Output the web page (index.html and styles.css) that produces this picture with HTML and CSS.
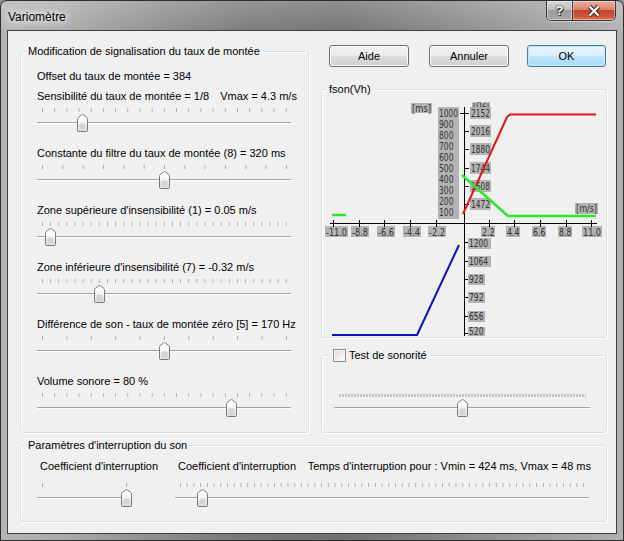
FILE: index.html
```html
<!DOCTYPE html>
<html lang="fr">
<head>
<meta charset="utf-8">
<title>Variomètre</title>
<link rel="stylesheet" href="styles.css">
</head>
<body>
<svg class="defs" width="0" height="0" aria-hidden="true">
  <defs>
    <linearGradient id="thumbFill" x1="0" y1="0" x2="0" y2="1">
      <stop offset="0" stop-color="#ffffff"/>
      <stop offset="0.55" stop-color="#f3f3f3"/>
      <stop offset="1" stop-color="#dadada"/>
    </linearGradient>
    <symbol id="thumb" viewBox="0 0 11 18">
      <path d="M1.5,17.5 Q0.5,17.5 0.5,16.5 V5.2 Q0.5,4.2 1.3,3.4 L4.6,0.9 Q5.5,0.3 6.4,0.9 L9.7,3.4 Q10.5,4.2 10.5,5.2 V16.5 Q10.5,17.5 9.5,17.5 Z" fill="url(#thumbFill)" stroke="#7a7a7a"/>
      <rect x="2.5" y="9.5" width="6" height="6" rx="0.5" fill="#d4d4d4"/>
    </symbol>
  </defs>
</svg>
<div class="window">
  <div class="titlebar">
    <span class="title">Variomètre</span>
    <div class="caption-buttons">
      <div class="cap help">?</div>
      <div class="cap close">
        <svg width="14" height="12" viewBox="0 0 14 12">
          <path d="M2.5,1.5 L11.5,10.5 M11.5,1.5 L2.5,10.5" stroke="#3b1d16" stroke-width="4.4"/>
          <path d="M2.5,1.5 L11.5,10.5 M11.5,1.5 L2.5,10.5" stroke="#ffffff" stroke-width="2.4"/>
        </svg>
      </div>
    </div>
  </div>
  <div class="client">
    <div class="top">
      <div class="group left-group">
        <div class="group-title">Modification de signalisation du taux de montée</div>
        <div class="rows">
          <div class="label first">Offset du taux de montée = 384</div>
          <div class="label second">Sensibilité du taux de montée = 1/8<span class="vmax">Vmax = 4.3 m/s</span></div>
          <div class="slider" style="--n:20;--p:0.165"><div class="ticks"></div><div class="track"></div><svg class="thumb"><use href="#thumb"/></svg></div>
          <div class="label">Constante du filtre du taux de montée (8) = 320 ms</div>
          <div class="slider" style="--n:12;--p:0.5"><div class="ticks"></div><div class="track"></div><svg class="thumb"><use href="#thumb"/></svg></div>
          <div class="label">Zone supérieure d'insensibilité (1) = 0.05 m/s</div>
          <div class="slider" style="--n:30;--p:0.0333"><div class="ticks"></div><div class="track"></div><svg class="thumb"><use href="#thumb"/></svg></div>
          <div class="label">Zone inférieure d'insensibilité (7) = -0.32 m/s</div>
          <div class="slider" style="--n:30;--p:0.2333"><div class="ticks"></div><div class="track"></div><svg class="thumb"><use href="#thumb"/></svg></div>
          <div class="label">Différence de son - taux de montée zéro [5] = 170 Hz</div>
          <div class="slider" style="--n:10;--p:0.5"><div class="ticks"></div><div class="track"></div><svg class="thumb"><use href="#thumb"/></svg></div>
          <div class="label">Volume sonore = 80 %</div>
          <div class="slider" style="--n:20;--p:0.775"><div class="ticks"></div><div class="track"></div><svg class="thumb"><use href="#thumb"/></svg></div>
        </div>
      </div>
      <div class="right-col">
        <div class="buttons">
          <div class="btn aide">Aide</div>
          <div class="btn annuler">Annuler</div>
          <div class="btn ok">OK</div>
        </div>
        <div class="group chart-group">
          <div class="group-title">fson(Vh)</div>
          <svg class="chart" width="284" height="240" viewBox="322 96 284 240">
            <defs>
              <clipPath id="hzclip"><rect x="470" y="102.5" width="22" height="5"/></clipPath>
            </defs>
            <g class="boxes" fill="#b3b3b3">
              <rect x="411" y="103" width="21" height="10"/>
              <rect x="438" y="107" width="21" height="112"/>
              <rect x="472" y="102.5" width="18" height="5"/>
              <rect x="470" y="107" width="21" height="12"/>
              <rect x="470" y="125" width="21" height="12"/>
              <rect x="470" y="143" width="21" height="12"/>
              <rect x="470" y="162" width="21" height="12"/>
              <rect x="470" y="180" width="21" height="12"/>
              <rect x="470" y="198" width="21" height="12"/>
              <rect x="468" y="238" width="23" height="11"/>
              <rect x="468" y="256" width="23" height="11"/>
              <rect x="468" y="274" width="17" height="11"/>
              <rect x="468" y="292" width="17" height="11"/>
              <rect x="468" y="311" width="17" height="11"/>
              <rect x="468" y="327" width="17" height="9"/>
              <rect x="575" y="203" width="23" height="11"/>
              <rect x="325" y="226" width="23" height="11"/>
              <rect x="351" y="226" width="18" height="11"/>
              <rect x="377" y="226" width="18" height="11"/>
              <rect x="403" y="226" width="18" height="11"/>
              <rect x="428" y="226" width="18" height="11"/>
              <rect x="481" y="226" width="14" height="11"/>
              <rect x="506" y="226" width="14" height="11"/>
              <rect x="532" y="226" width="14" height="11"/>
              <rect x="558" y="226" width="14" height="11"/>
              <rect x="582" y="226" width="20" height="11"/>
            </g>
            <g class="lbl">
              <text x="412" y="111.5" textLength="19" lengthAdjust="spacingAndGlyphs">[ms]</text>
              <text x="439" y="117" textLength="19" lengthAdjust="spacingAndGlyphs">1000</text>
              <text x="439" y="128" textLength="14.5" lengthAdjust="spacingAndGlyphs">900</text>
              <text x="439" y="139" textLength="14.5" lengthAdjust="spacingAndGlyphs">800</text>
              <text x="439" y="150" textLength="14.5" lengthAdjust="spacingAndGlyphs">700</text>
              <text x="439" y="161" textLength="14.5" lengthAdjust="spacingAndGlyphs">600</text>
              <text x="439" y="172" textLength="14.5" lengthAdjust="spacingAndGlyphs">500</text>
              <text x="439" y="183" textLength="14.5" lengthAdjust="spacingAndGlyphs">400</text>
              <text x="439" y="194" textLength="14.5" lengthAdjust="spacingAndGlyphs">300</text>
              <text x="439" y="205" textLength="14.5" lengthAdjust="spacingAndGlyphs">200</text>
              <text x="439" y="216" textLength="14.5" lengthAdjust="spacingAndGlyphs">100</text>
              <text x="473" y="106.5" textLength="16" lengthAdjust="spacingAndGlyphs" clip-path="url(#hzclip)">[Hz]</text>
              <text x="471" y="117" textLength="19" lengthAdjust="spacingAndGlyphs">2152</text>
              <text x="471" y="135" textLength="19" lengthAdjust="spacingAndGlyphs">2016</text>
              <text x="471" y="153" textLength="19" lengthAdjust="spacingAndGlyphs">1880</text>
              <text x="471" y="172" textLength="19" lengthAdjust="spacingAndGlyphs">1744</text>
              <text x="471" y="190" textLength="19" lengthAdjust="spacingAndGlyphs">1608</text>
              <text x="471" y="208" textLength="19" lengthAdjust="spacingAndGlyphs">1472</text>
              <text x="469" y="247" textLength="19" lengthAdjust="spacingAndGlyphs">1200</text>
              <text x="469" y="265" textLength="19" lengthAdjust="spacingAndGlyphs">1064</text>
              <text x="469" y="283" textLength="14.5" lengthAdjust="spacingAndGlyphs">928</text>
              <text x="469" y="301" textLength="14.5" lengthAdjust="spacingAndGlyphs">792</text>
              <text x="469" y="320" textLength="14.5" lengthAdjust="spacingAndGlyphs">656</text>
              <text x="469" y="335" textLength="14.5" lengthAdjust="spacingAndGlyphs">520</text>
              <text x="576" y="212" textLength="21" lengthAdjust="spacingAndGlyphs">[m/s]</text>
              <text x="326" y="235.5" textLength="21" lengthAdjust="spacingAndGlyphs">-11.0</text>
              <text x="352" y="235.5" textLength="16" lengthAdjust="spacingAndGlyphs">-8.8</text>
              <text x="378" y="235.5" textLength="16" lengthAdjust="spacingAndGlyphs">-6.6</text>
              <text x="404" y="235.5" textLength="16" lengthAdjust="spacingAndGlyphs">-4.4</text>
              <text x="429" y="235.5" textLength="16" lengthAdjust="spacingAndGlyphs">-2.2</text>
              <text x="482" y="235.5" textLength="12.5" lengthAdjust="spacingAndGlyphs">2.2</text>
              <text x="507" y="235.5" textLength="12.5" lengthAdjust="spacingAndGlyphs">4.4</text>
              <text x="533" y="235.5" textLength="12.5" lengthAdjust="spacingAndGlyphs">6.6</text>
              <text x="559" y="235.5" textLength="12.5" lengthAdjust="spacingAndGlyphs">8.8</text>
              <text x="583" y="235.5" textLength="18" lengthAdjust="spacingAndGlyphs">11.0</text>
            </g>
            <g class="axes" stroke="#000" stroke-width="1" fill="none">
              <path d="M464.5,107 V340"/>
              <path d="M330,223.5 H597"/>
              <path d="M333.5,220 V227 M359.5,220 V227 M384.5,220 V227 M410.5,220 V227 M436.5,220 V227 M489.5,220 V227 M514.5,220 V227 M540.5,220 V227 M566.5,220 V227 M591.5,220 V227"/>
              <path d="M460,113.5 H469 M464,131.5 H469 M464,149.5 H469 M464,168.5 H469 M464,186.5 H469 M464,204.5 H469 M464,242.5 H468 M464,261.5 H468 M464,279.5 H468 M464,297.5 H468 M464,316.5 H468 M464,333.5 H468"/>
            </g>
            <g fill="none" stroke-linejoin="round">
              <polyline points="463,214 507,117 510,114.5 596,114.5" stroke="#e01818" stroke-width="2"/>
              <polyline points="462,175 508,216 596,216" stroke="#2fe62f" stroke-width="2.5"/>
              <polyline points="332,215 346,215" stroke="#2fe62f" stroke-width="2.5"/>
              <polyline points="332,335 417,335 459,245" stroke="#0a12b8" stroke-width="2"/>
            </g>
          </svg>
        </div>
        <div class="group test-group">
          <div class="group-title check-title"><span class="checkbox"></span><span>Test de sonorité</span></div>
          <div class="slider test-slider" style="--p:0.5"><div class="ticks dense"></div><div class="track"></div><svg class="thumb"><use href="#thumb"/></svg></div>
        </div>
      </div>
    </div>
    <div class="group bottom-group">
      <div class="group-title">Paramètres d'interruption du son</div>
      <div class="bottom-grid">
        <div class="label c1">Coefficient d'interruption</div>
        <div class="label c2"><span>Coefficient d'interruption</span><span>Temps d'interruption pour : Vmin = 424 ms, Vmax = 48 ms</span></div>
        <div class="slider" style="--n:1;--p:1"><div class="ticks"></div><div class="track"></div><svg class="thumb"><use href="#thumb"/></svg></div>
        <div class="slider" style="--n:60;--p:0.055"><div class="ticks"></div><div class="track"></div><svg class="thumb"><use href="#thumb"/></svg></div>
      </div>
    </div>
  </div>
</div>
</body>
</html>
```
FILE: styles.css
```css
* { box-sizing: border-box; }
html, body { margin: 0; padding: 0; }
body {
  width: 624px;
  height: 541px;
  overflow: hidden;
  background: #8e8e8e;
  font-family: "Liberation Sans", Arial, sans-serif;
  font-size: 11px;
  color: #000;
}
.defs { position: absolute; width: 0; height: 0; overflow: hidden; }

.window {
  width: 624px;
  height: 541px;
  display: flex;
  flex-direction: column;
  border: 1px solid #2e2e2e;
  border-radius: 7px 7px 0 0;
  padding: 0 6px 6px 6px;
  background:
    linear-gradient(180deg, rgba(255,255,255,0.22) 0, rgba(255,255,255,0.05) 29px, rgba(255,255,255,0) 30px),
    linear-gradient(90deg, #b4b4b4 0%, #aaaaaa 10%, #8f8f8f 24%, #777777 40%, #707070 55%, #848484 70%, #9b9b9b 85%, #b0b0b0 100%);
}

.titlebar {
  height: 29px;
  display: flex;
  align-items: flex-start;
  justify-content: space-between;
}
.title {
  margin-top: 8px;
  margin-left: 1px;
  font-size: 12px;
  line-height: 16px;
  color: #000;
  text-shadow: 0 0 6px #fff, 0 0 10px rgba(255,255,255,0.9), 0 0 14px rgba(255,255,255,0.7);
}
.caption-buttons {
  display: flex;
  margin-right: 1px;
  height: 20px;
  border: 1px solid #3a3a3a;
  border-top: none;
  border-radius: 0 0 5px 5px;
  overflow: hidden;
  box-shadow: 0 1px 0 rgba(255,255,255,0.4);
}
.cap {
  height: 19px;
  display: flex;
  align-items: center;
  justify-content: center;
}
.help {
  width: 26px;
  border-right: 1px solid #3a3a3a;
  background: linear-gradient(180deg, #d8d8d8 0%, #bdbdbd 45%, #9c9c9c 50%, #a9a9a9 100%);
  box-shadow: inset 0 0 0 1px rgba(255,255,255,0.45);
  color: #fff;
  font-weight: bold;
  font-size: 13px;
  text-shadow: 0 0 2px #222, 0 0 1px #000, 1px 1px 0 #333;
}
.close {
  width: 42px;
  background: linear-gradient(180deg, #eab1a3 0%, #d9826c 45%, #c2442c 50%, #d2573a 85%, #e4876c 100%);
  box-shadow: inset 0 0 0 1px rgba(255,255,255,0.35);
}

.client {
  flex: 1;
  border: 1px solid #3f3f3f;
  background: #f0f0f0;
  padding: 14px 9px 0 12px;
  display: flex;
  flex-direction: column;
}

.top {
  display: flex;
  align-items: flex-start;
  gap: 12px;
}

.group {
  border: 1px solid #d5dfe5;
  border-radius: 3px;
  box-shadow: inset 1px 1px 0 #ffffff, 1px 1px 0 #ffffff;
}
.group-title {
  margin: -8px 0 0 5px;
  padding: 0 2px;
  height: 14px;
  line-height: 14px;
  width: max-content;
  white-space: nowrap;
  background: #f0f0f0;
}

.left-group {
  width: 289px;
  height: 382px;
  margin-top: 6px;
}
.rows {
  padding: 10px 17px 0 16px;
}
.label {
  height: 16px;
  line-height: 16px;
  white-space: nowrap;
}
.label.second { margin-top: 4px; }
.vmax { margin-left: 11px; }

.slider {
  position: relative;
  height: 41px;
}
.slider .ticks {
  position: absolute;
  left: 5px;
  right: 4px;
  top: 4px;
  height: 4px;
  background-image: linear-gradient(90deg, #adadad 1px, transparent 1px);
  background-size: calc((100% - 1px) / var(--n)) 100%;
  background-repeat: repeat-x;
}
.slider .ticks.dense {
  top: 5px;
  height: 3px;
  background-image: repeating-linear-gradient(90deg, #c2c2c2 0 2px, transparent 2px 3px);
  background-size: auto;
}
.slider .track {
  position: absolute;
  left: 0;
  right: 0;
  top: 18px;
  height: 2px;
  border-top: 1px solid #a3a3a3;
  background: #ffffff;
}
.slider .thumb {
  position: absolute;
  top: 10px;
  width: 11px;
  height: 18px;
  left: calc(var(--p) * (100% - 10px));
}

.right-col {
  width: 286px;
  display: flex;
  flex-direction: column;
}
.buttons {
  display: flex;
  height: 22px;
  padding-left: 8px;
}
.btn {
  width: 80px;
  height: 22px;
  line-height: 20px;
  text-align: center;
  border: 1px solid #707070;
  border-radius: 3px;
  background: linear-gradient(180deg, #f2f2f2 0%, #ebebeb 48%, #dddddd 52%, #cfcfcf 100%);
  box-shadow: inset 0 0 0 1px #fbfbfb;
}
.aide { margin-right: 20px; }
.annuler { margin-right: 18px; }
.ok {
  width: 79px;
  border-color: #3c7fb1;
  background: linear-gradient(180deg, #eaf6fd 0%, #d9f0fc 48%, #bee6fd 52%, #a7d9f5 100%);
  box-shadow: inset 0 0 0 1px #bfe4f9, inset 0 0 2px 1px #e3f4fd;
}

.chart-group {
  margin-top: 22px;
  height: 249px;
}
.chart { display: block; }
.lbl text {
  font-family: "Liberation Sans Narrow", "DejaVu Sans Condensed", "Liberation Sans", sans-serif;
  font-size: 10.5px;
  fill: #333333;
}

.test-group {
  margin-top: 17px;
  height: 78px;
}
.check-title {
  display: flex;
  align-items: center;
  gap: 3px;
  margin-left: 8px;
  padding: 0 3px;
}
.checkbox {
  width: 13px;
  height: 13px;
  border: 1px solid #8e8f8f;
  background: linear-gradient(135deg, #d9dadb 0%, #eeeeee 60%, #fbfbfb 100%);
  box-shadow: inset 0 0 0 1px #f6f6f6;
}
.test-slider {
  margin: 27px 16px 0 12px;
}

.bottom-group {
  margin-top: 12px;
  height: 77px;
}
.bottom-grid {
  display: grid;
  grid-template-columns: 94px 414px;
  column-gap: 44px;
  row-gap: 5px;
  padding: 6px 17px 0 16px;
}
.bottom-grid .c1 { padding-left: 3px; }
.bottom-grid .c2 {
  display: flex;
  justify-content: space-between;
  padding-left: 3px;
  margin-right: -2px;
}
```
